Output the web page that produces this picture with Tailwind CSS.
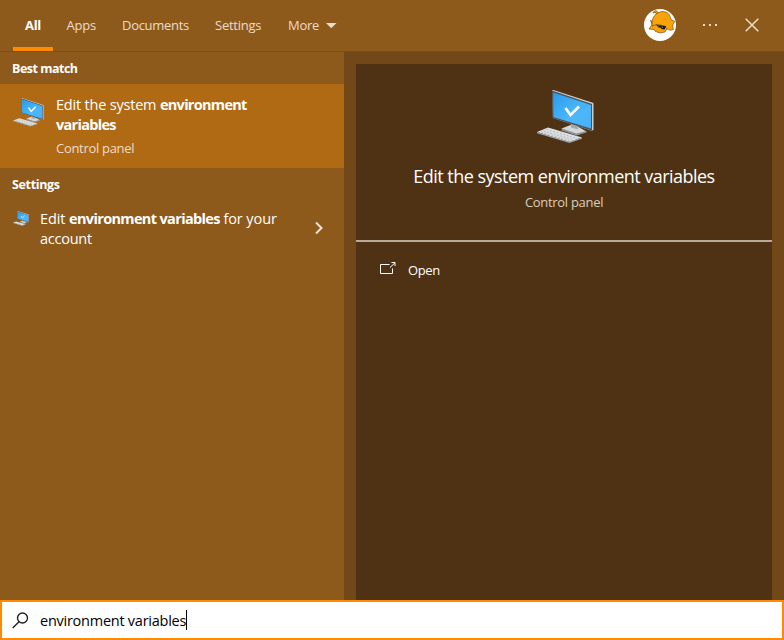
<!DOCTYPE html>
<html lang="en">
<head>
<meta charset="utf-8">
<title>Search</title>
<script src="https://cdn.jsdelivr.net/npm/@tailwindcss/browser@4"></script>
</head>
<body class="w-[784px] h-[640px] overflow-hidden flex flex-col bg-[#8e5a1c] font-['Open_Sans','Noto_Sans',sans-serif] text-white">
<svg width="0" height="0" class="absolute">
  <defs>
    <linearGradient id="screen" x1="0" y1="0" x2="1" y2="1"><stop offset="0" stop-color="#2b9bea"/><stop offset=".5" stop-color="#46b4fb"/><stop offset="1" stop-color="#3aa8f4"/></linearGradient>
    <symbol id="computer" viewBox="0 0 57 54">
      <path d="M24.500 38.500l9-3.500 8 2 8 4.500-10 3.500z" fill="#d3d7da"/>
      <path d="M24.500 38.500l15 5 10-2.500v1.500l-10 3-15-5z" fill="#8b9298"/>
      <path d="M34 33l7 2v4.500l-7-2z" fill="#a4abb0"/>
      <path d="M15 .5l1.500-.5L56.500 13v27l-2 .8L16 28z" fill="#c9cdd0"/>
      <path d="M15 .5l40 13.500v26.800L15.500 28z" fill="#4b545c"/>
      <path d="M16.300 2.500l37.700 12.500v23.500L16.300 27z" fill="url(#screen)"/>
      <path d="M54 15v23.500L27 30z" fill="#63c0fc" opacity=".35"/>
      <path d="M28.500 18l5 7 8.500-8.500" fill="none" stroke="#fff" stroke-width="2.600"/>
      <path d="M11 37.500L45 47.500l-12.500 4.500L0 42z" fill="#dde0e3"/>
      <path d="M0 42L32.500 51.500 45 47.500v1.200L32.500 53 0 43.300z" fill="#9ba2a9"/>
      <path d="M9.500 39.500l31 9M6.500 41l30 8.700M4 42l29 8.500" fill="none" stroke="#a9afb5" stroke-width=".8" stroke-dasharray="2 1.500"/>
    </symbol>
  </defs>
</svg>
<header class="h-[52px] shrink-0 flex border-b border-[#7f4f18] text-[13px] leading-[18px] text-[#ebdccb]">
  <nav class="flex w-[400px] pl-[13px]">
    <div class="w-[40px] flex flex-col justify-between pt-[16px] font-bold text-white"><span class="pl-[12px] tracking-[-0.3px]">All</span><span class="h-[4px] bg-[#ff8c00]"></span></div>
    <div class="w-[69px] pl-[13.500px] pt-[16px] tracking-[-0.25px]">Apps</div>
    <div class="w-[93px] pt-[16px] tracking-[-0.3px]">Documents</div>
    <div class="w-[73px] pt-[16px] tracking-[-0.25px]">Settings</div>
    <div class="flex pt-[16px] tracking-[-0.3px]"><span class="w-[38px]">More</span><svg width="11" height="6" class="mt-[7px]"><path d="M0 0h10.500L5.250 5.250z" fill="#ebdccb"/></svg></div>
  </nav>
  <div class="flex flex-1 justify-end pt-[9px]">
    <svg width="32" height="32" viewBox="0 0 32 32">
      <circle cx="16" cy="16" r="16" fill="#fff"/>
      <g stroke="#5c3d0c" stroke-width=".6" stroke-linejoin="round" fill="#f9a30c">
        <path d="M6.500 11.500l1.500 4-3 4.500 5 .5 1.500 2 4.500 1.500 5-1 2.500-4z"/>
        <path d="M12.500 6l-.5-2.500-3 .5c1-3 4-3 5-.5l-.5 2.500z"/>
        <path d="M8 14C8 8 12 3.500 18 2.500c6 0 8 3 9 8l4 2c-2 2-3 4.500-1.500 8-4 1.500-6 0-8.500-2.500-4-2.500-8.500-3-13-1z"/>
      </g>
      <path d="M12 15.500l4 1 6 .5-1.500 3.500-3-.5-1-1.500-2 0z" fill="#1b160e"/>
      <path d="M14 16.500l.5 1M18 17.500l.5 1.500" stroke="#ddd" stroke-width=".6"/>
    </svg>
    <svg width="16" height="4" class="ml-[26px] mt-[14px]"><path d="M1 1h2v2H1zM7 1h2v2H7zM13 1h2v2h-2z" fill="#ebdccb"/></svg>
    <svg width="14" height="14" class="ml-[27px] mr-[25px] mt-[9px]"><path d="M.7.700l12.600 12.600M13.300.700L.7 13.300" stroke="#ebdccb" stroke-width="1.500"/></svg>
  </div>
</header>
<main class="flex h-[548px] shrink-0">
  <section class="w-[344px]">
    <h2 class="h-[32px] pl-[12px] pt-[8px] text-[12.500px] leading-[18px] font-bold tracking-[-0.500px]">Best match</h2>
    <div class="h-[84px] bg-[#b06a14] flex">
      <svg width="31" height="29" class="ml-[13px] mt-[14px]"><use href="#computer"/></svg>
      <div class="pl-[12px] pt-[11px] whitespace-nowrap text-[14.500px] leading-[20px]">
        <p><span class="tracking-[-0.200px]">Edit the system </span><b class="tracking-[-0.700px]">environment</b></p>
        <p><b class="tracking-[-0.700px]">variables</b></p>
        <p class="mt-[4px] text-[13px] leading-[18px] text-[#efdcc5] tracking-[-0.300px]">Control panel</p>
      </div>
    </div>
    <h2 class="h-[34px] pl-[12px] pt-[8px] text-[12.500px] leading-[18px] font-bold tracking-[-0.350px]">Settings</h2>
    <div class="flex">
      <svg width="16" height="15" class="ml-[13px] mt-[9px]"><use href="#computer"/></svg>
      <div class="w-[273px] pl-[11px] pt-[7px] whitespace-nowrap text-[14.500px] leading-[20px]">
        <p><span class="tracking-[-0.100px]">Edit </span><b class="tracking-[-0.650px]">environment variables</b><span class="tracking-[-0.100px]"> for your</span></p>
        <p class="tracking-[-0.250px]">account</p>
      </div>
      <svg width="10" height="14" class="ml-[12px] mt-[19px]"><path d="M2 1.500l5.500 5.500L2 12.500" fill="none" stroke="#efe3d6" stroke-width="2"/></svg>
    </div>
  </section>
  <section class="w-[440px] bg-[#734818] pt-[12px] px-[12px]">
    <div class="h-full w-[416px] bg-[#4f3213]">
      <div class="h-[178px] border-b-2 border-[#b8a99a] flex flex-col items-center pt-[26px]">
        <svg width="57" height="54" class="ml-[3px]"><use href="#computer"/></svg>
        <h1 class="mt-[19px] text-[18px] leading-[26px] whitespace-nowrap tracking-[-0.530px]">Edit the system environment variables</h1>
        <p class="mt-[4px] text-[13px] leading-[18px] text-[#d9cec2] tracking-[-0.300px]">Control panel</p>
      </div>
      <div class="flex pt-[18px] pl-[24px]">
        <svg width="16" height="13" class="mt-[2px]" fill="none" stroke="#fff"><path d="M9.500 2.500H.5v9h12V6.500M10 5.500L15 .8M11.500.5h3.500v3.500"/></svg>
        <span class="pl-[12px] text-[13px] leading-[20px] tracking-[-0.400px]">Open</span>
      </div>
    </div>
  </section>
</main>
<footer class="h-[40px] shrink-0 border-2 border-[#ff8c00] bg-white text-black flex items-center pl-[10px]">
  <svg width="17" height="17" fill="none" stroke="#222" stroke-width="1.400"><circle cx="10.500" cy="6" r="5"/><path d="M7 9.700L.7 16"/></svg>
  <span class="pl-[11px] pt-[1px] text-[14.500px] leading-[20px] tracking-[-0.250px]">environment variables</span><span class="w-px h-[20px] bg-black"></span>
</footer>
</body>
</html>
